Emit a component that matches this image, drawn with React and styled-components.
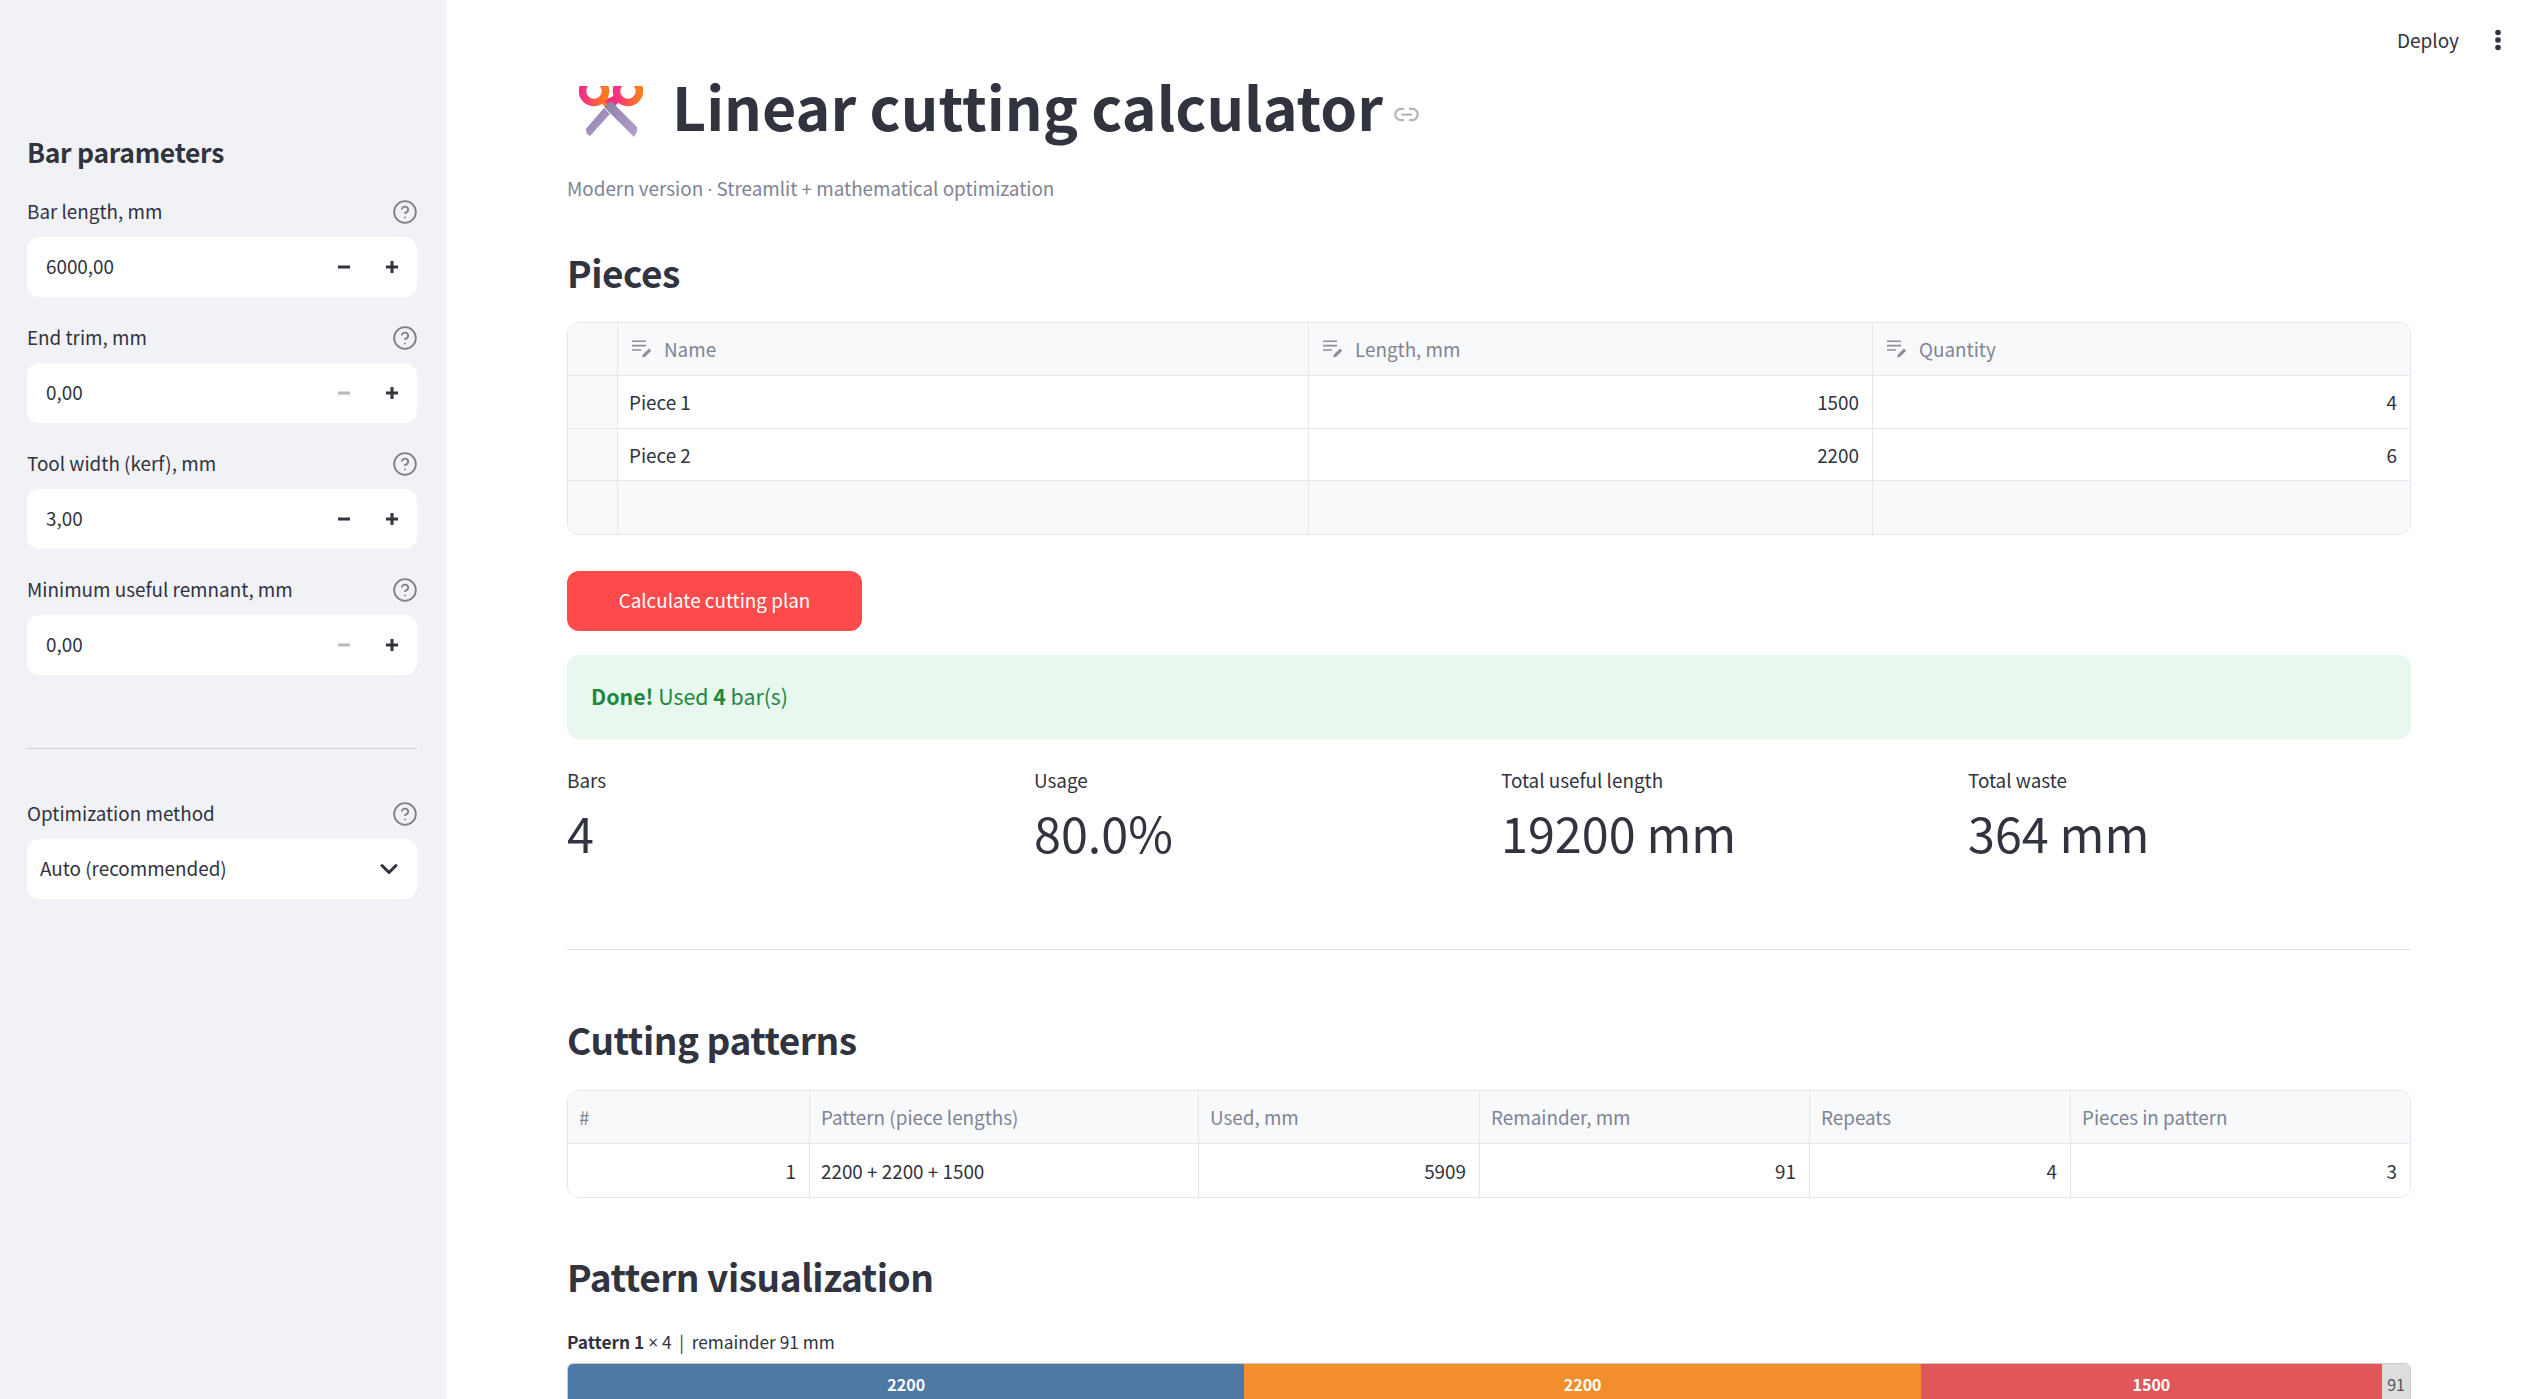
import styled, { createGlobalStyle } from "styled-components";
import { CircleHelp, ChevronDown, Link2 } from "lucide-react";

const ink = "#31333f";
const muted = "#808495";
const line = "#e6e7eb";
const wash = "#f8f9fb";
const textSize = "18.85px";

const GlobalStyle = createGlobalStyle`
  html, body {
    margin: 0;
    height: 100%;
    overflow: hidden;
    background: #fff;
  }
  body {
    font-family: "Noto Sans CJK SC", "Open Sans", sans-serif;
    color: ${ink};
  }
`;

const Shell = styled.div`
  display: flex;
  height: 100vh;
  overflow: hidden;
  position: relative;
`;

const Sidebar = styled.aside`
  flex: 0 0 447px;
  box-sizing: border-box;
  padding: 134px 30px 0 27px;
  background: #f0f2f6;
`;

const SideTitle = styled.h2`
  margin: 0 0 27px;
  font-size: 26.5px;
  line-height: 36px;
  font-weight: 600;
  letter-spacing: -0.3px;
`;

const Field = styled.div`
  margin-bottom: ${(p) => p.$gap || 26}px;
`;

const FieldBelow = styled(Field)`
  margin-top: 50px;
`;

const LabelRow = styled.div`
  display: flex;
  align-items: center;
  justify-content: space-between;
  height: 30px;
  margin-bottom: 10px;
  font-size: ${textSize};
`;

const LabelText = styled.span`
  margin-top: -3px;
`;

const HelpIcon = styled(CircleHelp)`
  width: 26px;
  height: 26px;
  margin-right: -1px;
  color: #7f8089;
  stroke-width: 1.7;
`;

const InputBox = styled.div`
  display: flex;
  align-items: center;
  height: 60px;
  padding: 0 17px 0 ${(p) => p.$pad || 19}px;
  border-radius: 12px;
  background: #fff;
  font-size: ${textSize};
`;

const InputValue = styled.span`
  flex: 1;
  padding-bottom: 3px;
`;

const StepIcon = styled.svg`
  width: 16px;
  height: 16px;
  margin-left: ${(p) => p.$gap}px;
  color: ${(p) => (p.$off ? "#b9bac0" : ink)};
`;

const SelectChevron = styled(ChevronDown)`
  width: 28px;
  height: 28px;
  margin-right: -3px;
  stroke-width: 2.6;
`;

const Divider = styled.hr`
  margin: 0;
  border: 0;
  border-top: 1px solid ${(p) => p.$color};
`;

const Main = styled.main`
  flex: 1;
  min-width: 0;
  box-sizing: border-box;
  padding: 60px 110px 0 120px;
`;

const TitleRow = styled.div`
  display: flex;
  height: 96px;
  align-items: center;
`;

const Scissors = styled.svg`
  flex: none;
  width: 64px;
  height: 51px;
  margin: 6px 29px 0 12px;
`;

const Title = styled.h1`
  margin: 0;
  padding-bottom: 6px;
  font-size: 59.1px;
  line-height: 90px;
  font-weight: 700;
`;

const LinkIcon = styled(Link2)`
  width: 27px;
  height: 27px;
  margin: 12px 0 0 10px;
  color: #b4b5bc;
`;

const Subtitle = styled.p`
  margin: 17px 0 0;
  font-size: ${textSize};
  line-height: 30px;
  color: ${muted};
`;

// the CJK face sets these two signs full width, so they come from a latin face
const LatinSign = styled.span`
  font-family: "Open Sans", sans-serif;
  line-height: 1;
`;

const Heading = styled.h3`
  margin: ${(p) => p.$top - 1}px 0 ${(p) => p.$bottom + 1}px;
  font-size: 37px;
  line-height: 54px;
  font-weight: 600;
  letter-spacing: -0.45px;
`;

const Table = styled.div`
  display: grid;
  grid-template-columns: ${(p) => p.$cols};
  grid-auto-rows: 52.75px;
  border: 1px solid ${line};
  border-radius: 12px;
  overflow: hidden;
  font-size: ${textSize};
`;

const Cell = styled.div`
  display: flex;
  align-items: center;
  justify-content: ${(p) => (p.$right ? "flex-end" : "flex-start")};
  box-sizing: border-box;
  min-width: 0;
  padding: 0 13px 0 ${(p) => (p.$icon ? 14 : 11)}px;
  background: ${(p) => (p.$wash ? wash : "#fff")};
  color: ${(p) => (p.$head ? muted : ink)};
  border-right: ${(p) => (p.$last ? "0" : `1px solid ${line}`)};
  border-bottom: ${(p) => (p.$end ? "0" : `1px solid ${line}`)};
`;

const EditIcon = styled.svg`
  flex: none;
  width: 20px;
  height: 18px;
  margin-right: 12px;
  color: #8c8e99;
`;

const RunButton = styled.button`
  display: block;
  width: 295px;
  height: 60px;
  margin-top: 36px;
  padding: 0 0 3px;
  border: 0;
  border-radius: 12px;
  background: #ff4b4b;
  color: #fff;
  font: inherit;
  font-size: ${textSize};
`;

const Alert = styled.div`
  display: flex;
  align-items: center;
  box-sizing: border-box;
  height: 84px;
  margin-top: 24px;
  padding: 0 0 3px 24px;
  border-radius: 12px;
  background: #e8f8ee;
  color: #1b8a40;
  font-size: 21.3px;
`;

const Metrics = styled.div`
  display: grid;
  grid-template-columns: repeat(4, 467px);
  margin: 26px 0 81px;
`;

const MetricLabel = styled.div`
  font-size: ${textSize};
  line-height: 30px;
`;

const MetricValue = styled.div`
  margin-top: 1px;
  font-size: 48.5px;
  line-height: 72px;
`;

const PatternLine = styled.div`
  margin: 26px 0 8px;
  font-size: 17.3px;
  line-height: 26px;
`;

const PatternBar = styled.div`
  display: flex;
  height: 45px;
  border: 1px solid #ccc;
  border-radius: 6px;
  overflow: hidden;
`;

const Segment = styled.div`
  display: flex;
  align-items: center;
  justify-content: center;
  box-sizing: border-box;
  flex: ${(p) => p.$size} 0 0;
  min-width: 0;
  padding-bottom: 5px;
  background: ${(p) => p.$color};
  color: ${(p) => (p.$rest ? "#555" : "#fff")};
  font-size: 16px;
  font-weight: ${(p) => (p.$rest ? 400 : 700)};
`;

const Toolbar = styled.div`
  position: absolute;
  top: 25px;
  right: 19px;
  display: flex;
  align-items: center;
  gap: 35px;
  font-size: 19px;
  line-height: 30px;
`;

const MenuDots = styled.svg`
  width: 8px;
  height: 24px;
  color: ${ink};
`;

const fields = [
  { label: "Bar length, mm", value: "6000,00" },
  { label: "End trim, mm", value: "0,00", off: true },
  { label: "Tool width (kerf), mm", value: "3,00" },
  { label: "Minimum useful remnant, mm", value: "0,00", off: true },
];

const pieces = [
  ["Piece 1", "1500", "4"],
  ["Piece 2", "2200", "6"],
];

const patternHeads = ["#", "Pattern (piece lengths)", "Used, mm", "Remainder, mm", "Repeats", "Pieces in pattern"];
const patternRow = [
  { text: "1", right: true },
  { text: "2200 + 2200 + 1500" },
  { text: "5909", right: true },
  { text: "91", right: true },
  { text: "4", right: true },
  { text: "3", right: true },
];

const metrics = [
  ["Bars", "4"],
  ["Usage", "80.0%"],
  ["Total useful length", "19200 mm"],
  ["Total waste", "364 mm"],
];

const segments = [
  { size: 2200, color: "#4e79a7", text: "2200" },
  { size: 2200, color: "#f28e2b", text: "2200" },
  { size: 1500, color: "#e15759", text: "1500" },
  { size: 91, color: "#ddd", text: "91", rest: true },
];

const Minus = ({ off }) => (
  <StepIcon viewBox="0 0 16 16" $gap={0} $off={off}>
    <rect x="2" y="6.5" width="12" height="3" fill="currentColor" />
  </StepIcon>
);

const Plus = () => (
  <StepIcon viewBox="0 0 16 16" $gap={32}>
    <path d="M6.5 2h3v4.5H14v3H9.5V14h-3V9.5H2v-3h4.5z" fill="currentColor" />
  </StepIcon>
);

const Edit = () => (
  <EditIcon viewBox="0 0 20 18">
    <path d="M0 1.2h14M0 5.6h14M0 10h9" stroke="currentColor" strokeWidth="1.6" fill="none" />
    <path d="M10 17.5l1-3L17 8.5l2.2 2.2-6 6z" fill="currentColor" />
  </EditIcon>
);

const ScissorsEmoji = () => (
  <Scissors viewBox="0 0 64 51">
    <defs>
      <linearGradient id="handle" x1="0" y1="0" x2="1" y2="0">
        <stop offset="0" stopColor="#f52f83" />
        <stop offset="1" stopColor="#ff7a1c" />
      </linearGradient>
      <linearGradient id="blade" x1="0" y1="0" x2="1" y2="1">
        <stop offset="0" stopColor="#8e7cab" />
        <stop offset="1" stopColor="#b5a2cd" />
      </linearGradient>
    </defs>
    <path d="M8 48L6.800 43 25 22 31 28 11 50z" fill="url(#blade)" />
    <path d="M20 14L27 22 36 16 24 8z" fill="#ff7a1c" />
    <path d="M42 14L34 22 25 15 38 8z" fill="#f0307c" />
    <circle cx="15" cy="5" r="11.500" fill="none" stroke="url(#handle)" strokeWidth="7.500" />
    <circle cx="49" cy="5" r="11.500" fill="none" stroke="url(#handle)" strokeWidth="7.500" />
    <path d="M25 21L32 15 58 41 58 46 55 51z" fill="url(#blade)" />
    <circle cx="32" cy="21" r="2.500" fill="#8b8aa0" />
  </Scissors>
);

const App = () => (
  <Shell>
    <GlobalStyle />
    <Sidebar>
      <SideTitle>Bar parameters</SideTitle>
      {fields.map((f, i) => (
        <Field key={f.label} $gap={i === 3 ? 73 : 26}>
          <LabelRow>
            <LabelText>{f.label}</LabelText>
            <HelpIcon />
          </LabelRow>
          <InputBox>
            <InputValue>{f.value}</InputValue>
            <Minus off={f.off} />
            <Plus />
          </InputBox>
        </Field>
      ))}
      <Divider $color="#cfd1d7" />
      <FieldBelow>
        <LabelRow>
          <LabelText>Optimization method</LabelText>
          <HelpIcon />
        </LabelRow>
        <InputBox $pad={13}>
          <InputValue>Auto (recommended)</InputValue>
          <SelectChevron />
        </InputBox>
      </FieldBelow>
    </Sidebar>

    <Main>
      <TitleRow>
        <ScissorsEmoji />
        <Title>Linear cutting calculator</Title>
        <LinkIcon />
      </TitleRow>
      <Subtitle>Modern version <LatinSign>·</LatinSign> Streamlit + mathematical optimization</Subtitle>

      <Heading $top={43} $bottom={22}>Pieces</Heading>
      <Table $cols="50px 691px 564px 1fr">
        <Cell $wash />
        <Cell $wash $head $icon><Edit />Name</Cell>
        <Cell $wash $head $icon><Edit />Length, mm</Cell>
        <Cell $wash $head $icon $last><Edit />Quantity</Cell>
        {pieces.map(([name, len, qty]) => [
          <Cell key={name + "i"} $wash />,
          <Cell key={name}>{name}</Cell>,
          <Cell key={name + "l"} $right>{len}</Cell>,
          <Cell key={name + "q"} $right $last>{qty}</Cell>,
        ])}
        <Cell $wash $end />
        <Cell $wash $end />
        <Cell $wash $end />
        <Cell $wash $end $last />
      </Table>

      <RunButton>Calculate cutting plan</RunButton>

      <Alert>
        <span><b>Done!</b> Used <b>4</b> bar(s)</span>
      </Alert>

      <Metrics>
        {metrics.map(([label, value]) => (
          <div key={label}>
            <MetricLabel>{label}</MetricLabel>
            <MetricValue>{value}</MetricValue>
          </div>
        ))}
      </Metrics>

      <Divider $color="#e0e1e5" />

      <Heading $top={63} $bottom={23}>Cutting patterns</Heading>
      <Table $cols="242px 389px 281px 330px 261px 1fr">
        {patternHeads.map((h, i) => (
          <Cell key={h} $wash $head $last={i === 5}>{h}</Cell>
        ))}
        {patternRow.map((c, i) => (
          <Cell key={i} $right={c.right} $end $last={i === 5}>{c.text}</Cell>
        ))}
      </Table>

      <Heading $top={52} $bottom={0}>Pattern visualization</Heading>
      <PatternLine>
        <b>Pattern 1</b> <LatinSign>×</LatinSign> 4 &nbsp;|&nbsp; remainder 91 mm
      </PatternLine>
      <PatternBar>
        {segments.map((s, i) => (
          <Segment key={i} $size={s.size} $color={s.color} $rest={s.rest}>{s.text}</Segment>
        ))}
      </PatternBar>
    </Main>

    <Toolbar>
      <span>Deploy</span>
      <MenuDots viewBox="0 0 8 24">
        <circle cx="4" cy="4.500" r="2.800" fill="currentColor" />
        <circle cx="4" cy="12" r="2.800" fill="currentColor" />
        <circle cx="4" cy="19.500" r="2.800" fill="currentColor" />
      </MenuDots>
    </Toolbar>
  </Shell>
);

export default App;
